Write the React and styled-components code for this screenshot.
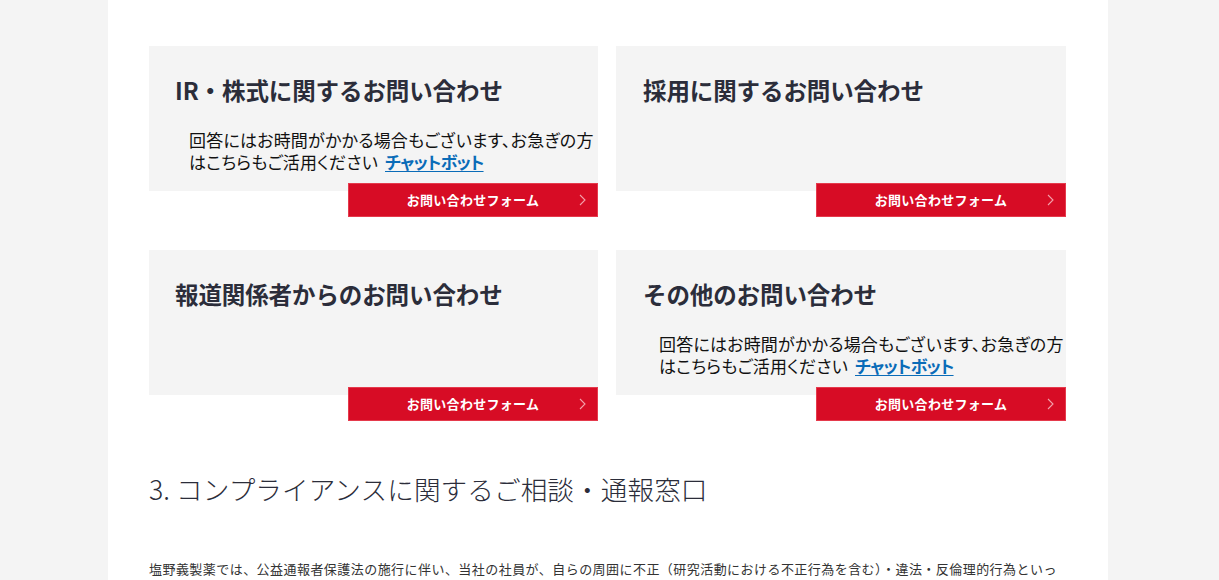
import React from "react";
import styled, { createGlobalStyle } from "styled-components";

const Global = createGlobalStyle`
  html, body { margin: 0; padding: 0; background: #f4f4f4; }
  body { font-family: "Noto Sans CJK JP", "Noto Sans", sans-serif; color: #333; }
`;

const Page = styled.div`
  width: 1000px;
  margin-left: 108px;
  background: #fff;
  min-height: 580px;
  box-sizing: border-box;
  padding: 46px 41px 0;
`;

const Grid = styled.div`
  display: grid;
  grid-template-columns: 449px 450px;
  column-gap: 18px;
  row-gap: 33px;
`;

const Card = styled.div`
  display: flex;
  flex-direction: column;
`;

const Panel = styled.div`
  background: #f4f4f4;
  height: 145px;
  box-sizing: border-box;
  padding: 26px 0 0 ${(p) => p.$pl || 26}px;
`;

const Title = styled.h3`
  margin: 0;
  font-size: 23.5px;
  line-height: 36px;
  font-weight: 700;
  color: #2b2d3a;
  letter-spacing: -0.1px;
`;

const Note = styled.p`
  margin: 21px 0 0 ${(p) => p.$ml || 14}px;
  width: 412px;
  font-size: 17px;
  line-height: 22px;
  color: #111;
  font-feature-settings: "palt";
  letter-spacing: 0.2px;
`;

const Link = styled.a`
  margin-left: 7px;
  color: #0a6cb8;
  font-weight: 700;
  text-decoration: underline;
  text-underline-offset: 2px;
  letter-spacing: -0.8px;
`;

const Button = styled.a`
  align-self: flex-end;
  margin-top: -8px;
  width: 250px;
  height: 34px;
  box-sizing: border-box;
  padding-bottom: 2px;
  background: #d70c25;
  border: 1px solid #e53a4c;
  color: #fff;
  text-decoration: none;
  font-size: 13px;
  font-weight: 700;
  display: flex;
  align-items: center;
  justify-content: center;
  position: relative;
  letter-spacing: 0.3px;
`;

const Chevron = styled.svg`
  position: absolute;
  right: 11px;
  top: 50%;
  transform: translateY(-50%);
`;

const Heading = styled.h2`
  margin: 50px 0 0;
  font-size: 26.6px;
  line-height: 36px;
  font-weight: 300;
  color: #2b2d3a;
  letter-spacing: 0.1px;
`;

const Paragraph = styled.p`
  margin: 50px 0 0;
  font-size: 13px;
  line-height: 24px;
  color: #333;
  letter-spacing: 0.45px;
`;

const items = [
  { title: "IR・株式に関するお問い合わせ", note: true },
  { title: "採用に関するお問い合わせ", note: false },
  { title: "報道関係者からのお問い合わせ", note: false },
  { title: "その他のお問い合わせ", note: true },
];

export default function App() {
  return (
    <>
      <Global />
      <Page>
        <Grid>
          {items.map((it, i) => (
            <Card key={i}>
              <Panel $pl={i % 2 ? 27 : 26}>
                <Title>{it.title}</Title>
                {it.note && (
                  <Note $ml={i % 2 ? 16 : 14}>
                    回答にはお時間がかかる場合もございます、お急ぎの方はこちらもご活用ください
                    <Link href="#">チャットボット</Link>
                  </Note>
                )}
              </Panel>
              <Button href="#">
                お問い合わせフォーム
                <Chevron width="7" height="12" viewBox="0 0 7 12">
                  <path d="M1 1l5 5-5 5" fill="none" stroke="#f3a0aa" strokeWidth="1.1" />
                </Chevron>
              </Button>
            </Card>
          ))}
        </Grid>
        <Heading>3. コンプライアンスに関するご相談・通報窓口</Heading>
        <Paragraph>
          塩野義製薬では、公益通報者保護法の施行に伴い、当社の社員が、自らの周囲に不正（研究活動における不正行為を含む）・違法・反倫理的行為といった問題を発見した場合に、相談・通報できる窓口を設置しています。
        </Paragraph>
      </Page>
    </>
  );
}
